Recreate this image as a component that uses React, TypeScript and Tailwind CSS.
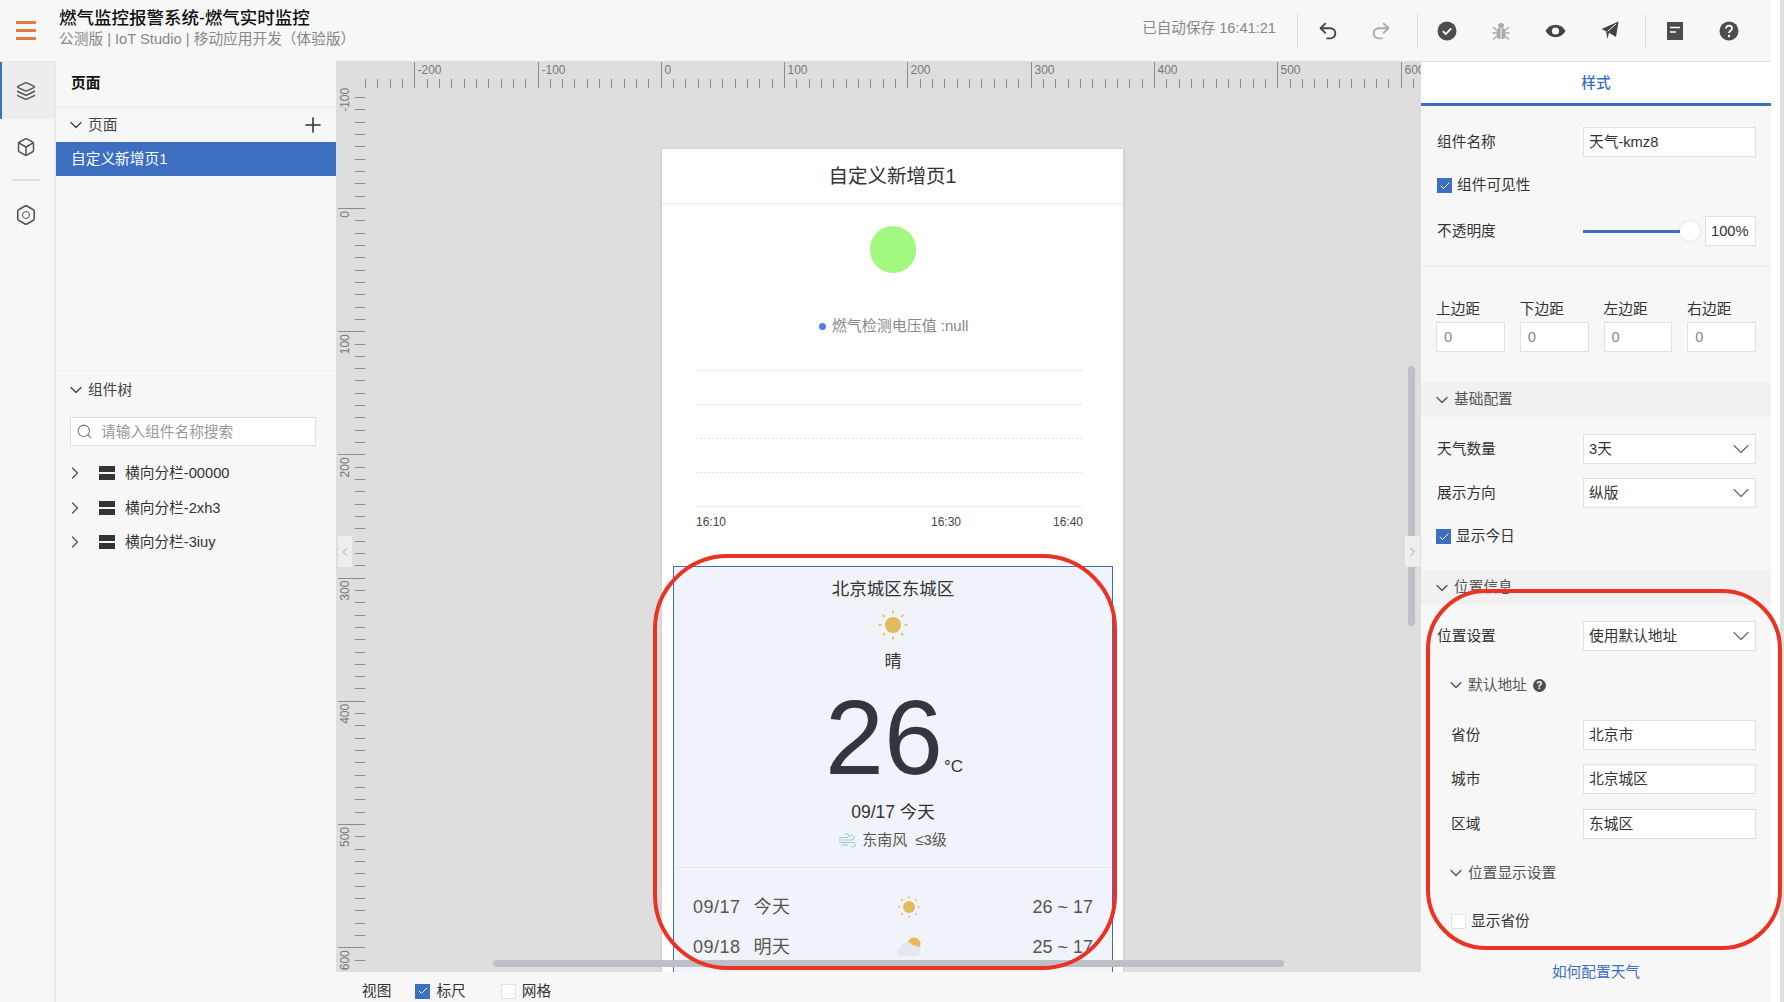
import { ChevronDown, ChevronLeft, ChevronRight, Plus, Search, Undo2, Redo2, Layers, Box, Hexagon, Check } from "lucide-react";
import type { ReactNode } from "react";

function Checkbox({ checked = false }: { checked?: boolean }) {
  if (checked) {
    return (
      <span className="flex size-[15px] shrink-0 items-center justify-center bg-[#3c6fc0] text-white">
        <Check size={12} strokeWidth={2} />
      </span>
    );
  }
  return <span className="block size-[15px] shrink-0 border border-[#e3e3e3] bg-white" />;
}

function TextBox({ children, className = "" }: { children?: ReactNode; className?: string }) {
  return (
    <div className={`flex h-[30px] items-center border border-[#e0e0e0] bg-white px-[5px] text-[14.7px] text-[#333] ${className}`}>
      {children}
    </div>
  );
}

function Row({ label, indent = false, className = "", children }: { label: string; indent?: boolean; className?: string; children: ReactNode }) {
  return (
    <div className={`flex h-[30px] items-center justify-between pr-[15px] ${indent ? "pl-[30px]" : "pl-[16px]"} ${className}`}>
      <span className="text-[14.7px] text-[#333]">{label}</span>
      {children}
    </div>
  );
}

function SelectBox({ value }: { value: string }) {
  return (
    <TextBox className="w-[173px] justify-between pr-0">
      <span>{value}</span>
      <ChevronDown size={28} strokeWidth={1} className="text-[#666]" />
    </TextBox>
  );
}

function SectionHead({ title, className = "" }: { title: string; className?: string }) {
  return (
    <div className={`flex h-[35px] items-center gap-[2px] bg-[#f1f1f1] pl-[11px] text-[14.7px] text-[#555] ${className}`}>
      <ChevronDown size={20} strokeWidth={1.6} />
      <span>{title}</span>
    </div>
  );
}

function SubHead({ title, className = "", children }: { title: string; className?: string; children?: ReactNode }) {
  return (
    <div className={`flex h-[20px] items-center gap-[2px] pl-[25px] text-[14.7px] text-[#555] ${className}`}>
      <ChevronDown size={20} strokeWidth={1.6} />
      <span>{title}</span>
      {children}
    </div>
  );
}

function Sun({ size }: { size: number }) {
  const rays = [0, 45, 90, 135, 180, 225, 270, 315];
  return (
    <svg width={size} height={size} viewBox="0 0 32 32">
      <circle cx="16" cy="16" r="8" fill="#e3bb5d" />
      {rays.map((r) => (
        <line key={r} x1="16" y1="1.5" x2="16" y2="4.5" stroke="#e8c26a" strokeWidth="2" transform={`rotate(${r} 16 16)`} />
      ))}
    </svg>
  );
}

function CloudSun() {
  return (
    <svg width="26" height="20" viewBox="0 0 26 20">
      <circle cx="18" cy="7" r="6.5" fill="#e3bb5d" />
      <path d="M5 19a4.5 4.5 0 0 1-.6-8.9A7 7 0 0 1 17 8.6 5.2 5.2 0 0 1 20.5 19z" fill="#e4e7ec" />
    </svg>
  );
}

function Wind() {
  return (
    <svg width="18" height="15" viewBox="0 0 18 15" fill="none" stroke="#9cc6d6" strokeWidth="1">
      <path d="M0 7h12.5a2.5 2.5 0 1 0-2.4-3.2" />
      <path d="M0 4.5h7.5a2 2 0 1 0-1.9-2.6" />
      <path d="M0 9.5h14a2.3 2.3 0 1 1-2.2 3" />
      <path d="M2 12h7" />
    </svg>
  );
}

function Ruler() {
  const hTicks: number[] = [];
  for (let k = -24; k <= 62; k++) hTicks.push(k);
  const vTicks: number[] = [];
  for (let k = -9; k <= 62; k++) {
    const y = 208 + k * 12.32 - 61;
    if (y >= 36) vTicks.push(k);
  }
  const labelY = [-100, 0, 100, 200, 300, 400, 500, 600];
  return (
    <svg className="pointer-events-none absolute top-0 left-0" width="1085" height="911" stroke="#8d8d8d" strokeWidth="1">
      {hTicks.map((k) => {
        const x = Math.round(660.8 + k * 12.33 - 336) + 0.5;
        const major = k % 10 === 0;
        return (
          <g key={k}>
            <line x1={x} x2={x} y1={major ? 1 : 18} y2={27} />
            {major && (
              <text x={x + 3} y={13} fontSize="12" fill="#777" stroke="none">
                {k * 10}
              </text>
            )}
          </g>
        );
      })}
      {vTicks.map((k) => {
        const y = Math.round(208 + k * 12.32 - 61) + 0.5;
        const major = k % 10 === 0;
        return <line key={k} y1={y} y2={y} x1={major ? 2 : 19} x2={29} />;
      })}
      {labelY.map((v) => {
        const y = 208 + v * 1.232 - 61 + 3;
        return (
          <text key={v} x={0} y={0} fontSize="12" fill="#777" stroke="none" textAnchor="end" transform={`translate(13 ${y}) rotate(-90)`}>
            {v}
          </text>
        );
      })}
    </svg>
  );
}

function Header() {
  return (
    <header className="flex h-[61px] shrink-0 items-center bg-[#f7f7f7]">
      <div className="ml-[16px] flex w-[20px] flex-col gap-[5px]">
        <span className="h-[3px] bg-[#e57a40]" />
        <span className="h-[3px] bg-[#e57a40]" />
        <span className="h-[3px] bg-[#e57a40]" />
      </div>
      <div className="mb-[5px] ml-[23px]">
        <div className="text-[17.5px] leading-[22px] font-medium text-[#111]">燃气监控报警系统-燃气实时监控</div>
        <div className="text-[14.7px] leading-[20px] text-[#888]">公测版 | IoT Studio | 移动应用开发（体验版）</div>
      </div>
      <div className="mb-[4px] ml-auto text-[14.6px] text-[#888]">已自动保存 16:41:21</div>
      <span className="mr-[19px] ml-[21px] h-[34px] w-px bg-[#ddd]" />
      <div className="flex w-[75px] items-center justify-between">
        <Undo2 size={22} strokeWidth={2} className="text-[#444]" />
        <Redo2 size={22} strokeWidth={2} className="text-[#aaa]" />
      </div>
      <span className="mr-[19px] ml-[25px] h-[34px] w-px bg-[#ddd]" />
      <div className="flex w-[182px] items-center justify-between">
        <svg width="20" height="20" viewBox="0 0 20 20">
          <circle cx="10" cy="10" r="9.5" fill="#4d4d4d" />
          <path d="M5.8 10.2l3 2.8 5.4-5.6" fill="none" stroke="#fff" strokeWidth="1.8" />
        </svg>
        <svg width="18" height="20" viewBox="0 0 18 20" fill="#aaa" stroke="#aaa">
          <ellipse cx="9" cy="4.5" rx="3" ry="2.5" stroke="none" />
          <rect x="4.5" y="7" width="9" height="11" rx="3.5" stroke="none" />
          <path d="M1 6l3.5 3M17 6l-3.5 3M.5 12h4M17.5 12h-4M1 18.5l3.5-3M17 18.5l-3.5-3" fill="none" strokeWidth="1.4" />
          <path d="M9 7v11" stroke="#f7f7f7" strokeWidth="1" />
        </svg>
        <svg width="21" height="14" viewBox="0 0 21 14">
          <path d="M.5 7C3 2.8 6.5.8 10.5.8S18 2.8 20.5 7C18 11.2 14.5 13.2 10.5 13.2S3 11.2.5 7z" fill="#444" />
          <circle cx="10.5" cy="7" r="3.6" fill="#f7f7f7" />
        </svg>
        <svg width="18" height="19" viewBox="0 0 18 19">
          <path d="M17.5.5L15 16 8 11.8 6.5 18 5 10.3.5 8z" fill="#444" />
          <path d="M15 3L6.5 10.5" stroke="#f7f7f7" strokeWidth="1" />
        </svg>
      </div>
      <span className="mr-[21px] ml-[26px] h-[34px] w-px bg-[#ddd]" />
      <div className="mr-[32px] flex w-[72px] items-center justify-between">
        <svg width="16" height="18" viewBox="0 0 16 18">
          <rect width="16" height="18" fill="#4d4d4d" />
          <path d="M3 5.5h10M3 10h6" stroke="#fff" strokeWidth="1.5" />
        </svg>
        <svg width="20" height="20" viewBox="0 0 20 20">
          <circle cx="10" cy="10" r="9.5" fill="#4d4d4d" />
          <path d="M7 7.6c0-1.8 1.3-2.9 3-2.9s3 1.100 3 2.700c0 2.300-3 2.300-3 4.600" fill="none" stroke="#fff" strokeWidth="1.8" />
          <circle cx="10" cy="15" r="1.2" fill="#fff" />
        </svg>
      </div>
    </header>
  );
}

function LeftRail() {
  return (
    <aside className="flex w-[56px] shrink-0 flex-col items-center border-t border-r-2 border-[#e8e8e8] bg-[#f7f7f7] text-[#555]">
      <div className="flex h-[57px] w-full items-center justify-center border-l-2 border-[#3c6fc0] bg-[#ededed] pr-[4px]">
        <Layers size={20} strokeWidth={1.8} />
      </div>
      <div className="flex h-[56px] w-full items-center justify-center pr-[2px]">
        <Box size={20} strokeWidth={1.8} />
      </div>
      <span className="mt-[4px] mr-[2px] h-[2px] w-[28px] bg-[#ddd]" />
      <div className="relative mt-[22px] mr-[2px] flex size-[24px] items-center justify-center">
        <Hexagon size={22} strokeWidth={1.8} />
        <span className="absolute size-[8px] rounded-full border-[1.5px] border-[#555]" />
      </div>
    </aside>
  );
}

function LeftPanel() {
  const tree = ["横向分栏-00000", "横向分栏-2xh3", "横向分栏-3iuy"];
  return (
    <aside className="flex w-[280px] shrink-0 flex-col bg-[#f7f7f7]">
      <div className="h-[310px] shrink-0 border-b border-[#eee]">
        <div className="flex h-[47px] items-center border-b-2 border-[#f0f0f0] pl-[15px] text-[14.7px] font-bold text-[#111]">页面</div>
        <div className="flex h-[34px] items-center justify-between pr-[11px] pl-[10px] text-[14.7px] text-[#444]">
          <span className="flex items-center gap-[2px]">
            <ChevronDown size={20} strokeWidth={1.6} />
            页面
          </span>
          <Plus size={24} strokeWidth={1.6} className="text-[#333]" />
        </div>
        <div className="flex h-[34px] items-center bg-[#3c6fc0] pl-[15px] text-[14.7px] text-white">自定义新增页1</div>
      </div>
      <div className="mt-[8px] flex items-center gap-[2px] pl-[10px] text-[14.7px] text-[#444]">
        <ChevronDown size={20} strokeWidth={1.6} />
        组件树
      </div>
      <div className="mx-[14px] mt-[16px] flex h-[29px] w-[246px] items-center border border-[#e0e0e0] bg-white pl-[5px] text-[14.7px] text-[#999]">
        <Search size={17} strokeWidth={1.5} className="mr-[8px] text-[#777]" />
        请输入组件名称搜索
      </div>
      <div className="mt-[10px] flex flex-col">
        {tree.map((name) => (
          <div key={name} className="flex h-[34.5px] items-center pl-[9px] text-[14.7px] text-[#333]">
            <ChevronRight size={20} strokeWidth={1.6} className="text-[#555]" />
            <span className="mr-[10px] ml-[14px] flex w-[16px] flex-col gap-[2px]">
              <span className="h-[6px] bg-[#333]" />
              <span className="h-[6px] bg-[#333]" />
            </span>
            {name}
          </div>
        ))}
      </div>
    </aside>
  );
}

function Forecast({ date, day, range, icon }: { date: string; day: string; range: string; icon: ReactNode }) {
  return (
    <div className="flex h-[40px] items-center pr-[19px] pl-[19px] text-[18px] text-[#555]">
      <span className="w-[203px] tracking-[0.5px]">
        {date}
        <span className="ml-[13px]">{day}</span>
      </span>
      <span className="flex w-[26px] justify-center">{icon}</span>
      <span className="flex-1 text-right">{range}</span>
    </div>
  );
}

function GridLine() {
  return <div className="h-px bg-[repeating-linear-gradient(90deg,#e4e4e4_0_2px,transparent_2px_4px)]" />;
}

function Phone() {
  return (
    <div className="mt-[88px] ml-[326px] w-[461px] bg-white shadow-[0_0_3px_rgba(0,0,0,0.12)]">
      <div className="flex h-[55px] items-center justify-center border-b border-[#eee] pt-[1px] text-[19.5px] text-[#333] shadow-[0_1px_3px_rgba(0,0,0,0.05)]">自定义新增页1</div>
      <div className="mx-auto mt-[22px] h-[47px] w-[46px] rounded-full bg-[#a3f87f]" />
      <div className="mt-[43px] flex items-center justify-center pl-[2px] text-[15px] leading-[20px] text-[#888]">
        <span className="mr-[6px] size-[7px] rounded-full bg-[#4f7cf0]" />
        燃气检测电压值 :null
      </div>
      <div className="mt-[34px] mr-[40px] ml-[34px] flex flex-col gap-[33px]">
        <GridLine />
        <GridLine />
        <GridLine />
        <GridLine />
        <div className="border-t border-[#eee]" />
      </div>
      <div className="relative mt-[6px] mr-[40px] ml-[34px] h-[18px] text-[12px] leading-[18px] text-[#444]">
        <span>16:10</span>
        <span className="absolute left-[235px]">16:30</span>
        <span className="absolute right-0">16:40</span>
      </div>
      <div className="mt-[35px] mr-[10px] ml-[11px] h-[420px] border border-[#3c6fc0] bg-[#f0f3f9] text-[#333]">
        <div className="mt-[11px] text-center text-[17.5px] leading-[22px]">北京城区东城区</div>
        <div className="mt-[9px] flex justify-center">
          <Sun size={32} />
        </div>
        <div className="mt-[10px] text-center text-[17px] leading-[22px]">晴</div>
        <div className="mt-[6px] flex items-end justify-center pl-[2px]">
          <span className="text-[106px] leading-[116px] text-[#33363b]">26</span>
          <span className="mb-[18px] ml-[1px] text-[17px] leading-[20px] text-[#33363b]">°C</span>
        </div>
        <div className="mt-[6px] text-center text-[17.5px] leading-[22px]">09/17 今天</div>
        <div className="mt-[7px] flex items-center justify-center gap-[5px] text-[15px] leading-[20px] text-[#555]">
          <Wind />
          <span>东南风</span>
          <span className="ml-[3px]">≤3级</span>
        </div>
        <div className="mt-[17px] border-t border-[#e3e6ec]" />
        <div className="mt-[19px]">
          <Forecast date="09/17" day="今天" range="26 ~ 17" icon={<Sun size={24} />} />
          <Forecast date="09/18" day="明天" range="25 ~ 17" icon={<CloudSun />} />
        </div>
      </div>
    </div>
  );
}

function Canvas() {
  return (
    <main className="flex w-[1085px] shrink-0 flex-col">
      <div className="relative h-[911px] shrink-0 overflow-hidden bg-[#dedede]">
        <Ruler />
        <Phone />
        <div className="absolute top-[899px] left-[157px] h-[7px] w-[791px] rounded-full bg-[#bcc1c8]" />
        <div className="absolute top-[305px] left-[1072px] h-[260px] w-[7px] rounded-full bg-[#bcc1c8]" />
        <div className="absolute top-[475px] left-[2px] flex h-[31px] w-[14px] items-center justify-center bg-[#eee] text-[#888]">
          <ChevronLeft size={16} strokeWidth={1.2} />
        </div>
        <div className="absolute top-[475px] left-[1069px] flex h-[31px] w-[15px] items-center justify-center bg-[#eee] text-[#888]">
          <ChevronRight size={16} strokeWidth={1.2} />
        </div>
      </div>
      <div className="flex h-[30px] items-center bg-[#f7f7f7] pt-[8px] pl-[26px] text-[14.7px] text-[#333]">
        <span>视图</span>
        <span className="ml-[24px]">
          <Checkbox checked />
        </span>
        <span className="ml-[6px]">标尺</span>
        <span className="ml-[35px]">
          <Checkbox />
        </span>
        <span className="ml-[6px]">网格</span>
      </div>
    </main>
  );
}

function RightPanel() {
  const margins = ["上边距", "下边距", "左边距", "右边距"];
  return (
    <aside className="w-[350px] shrink-0 border-t border-[#e0e0e0] bg-[#f7f7f7]">
      <div className="flex h-[44px] items-center justify-center border-b-[3px] border-[#3c6fc0] bg-white pt-[1px] text-[14.7px] font-medium text-[#3c6fc0]">样式</div>
      <Row label="组件名称" className="mt-[21px]">
        <TextBox className="w-[173px]">天气-kmz8</TextBox>
      </Row>
      <div className="mt-[21px] flex items-center gap-[5px] pl-[16px] text-[14.7px] leading-[15px] text-[#333]">
        <Checkbox checked />
        组件可见性
      </div>
      <Row label="不透明度" className="mt-[23px]">
        <div className="relative flex w-[173px] items-center justify-between">
          <span className="h-[3px] w-[97px] bg-[#3c6fc0]" />
          <span className="absolute left-[97px] size-[20px] rounded-full bg-white shadow-[0_0_3px_rgba(0,0,0,0.15)]" />
          <TextBox className="w-[51px] px-[3px]">100%</TextBox>
        </div>
      </Row>
      <div className="mt-[19px] border-t-2 border-[#f0f0f0]" />
      <div className="mt-[32px] grid grid-cols-4 gap-x-[15px] pr-[15px] pl-[15px]">
        {margins.map((m) => (
          <div key={m}>
            <div className="text-[14.7px] leading-[20px] text-[#333]">{m}</div>
            <TextBox className="mt-[3px] px-[7px] text-[#888]">0</TextBox>
          </div>
        ))}
      </div>
      <SectionHead title="基础配置" className="mt-[30px]" />
      <Row label="天气数量" className="mt-[17px]">
        <SelectBox value="3天" />
      </Row>
      <Row label="展示方向" className="mt-[14px]">
        <SelectBox value="纵版" />
      </Row>
      <div className="mt-[21px] flex items-center gap-[5px] pl-[15px] text-[14.7px] leading-[15px] text-[#333]">
        <Checkbox checked />
        显示今日
      </div>
      <SectionHead title="位置信息" className="mt-[26px]" />
      <Row label="位置设置" className="mt-[16px]">
        <SelectBox value="使用默认地址" />
      </Row>
      <SubHead title="默认地址" className="mt-[24px]">
        <span className="ml-[4px] flex size-[13px] items-center justify-center rounded-full bg-[#4d4d4d] text-[10px] font-bold text-white">?</span>
      </SubHead>
      <Row label="省份" indent className="mt-[25px]">
        <TextBox className="w-[173px]">北京市</TextBox>
      </Row>
      <Row label="城市" indent className="mt-[14px]">
        <TextBox className="w-[173px]">北京城区</TextBox>
      </Row>
      <Row label="区域" indent className="mt-[15px]">
        <TextBox className="w-[173px]">东城区</TextBox>
      </Row>
      <SubHead title="位置显示设置" className="mt-[24px]" />
      <div className="mt-[31px] flex items-center gap-[5px] pl-[30px] text-[14.7px] leading-[15px] text-[#333]">
        <Checkbox />
        显示省份
      </div>
      <div className="mt-[33px] text-center text-[14.7px] leading-[20px] text-[#3c6fc0]">如何配置天气</div>
    </aside>
  );
}

export default function App() {
  return (
    <div className="relative flex h-[1002px] w-[1784px] overflow-hidden bg-white font-['Liberation_Sans','Noto_Sans_CJK_SC',sans-serif]">
      <div className="flex w-[1771px] shrink-0 flex-col">
        <Header />
        <div className="flex h-[941px]">
          <LeftRail />
          <LeftPanel />
          <Canvas />
          <RightPanel />
        </div>
      </div>
      <div className="w-[9px] shrink-0 bg-white" />
      <div className="w-[4px] shrink-0 bg-[#e0e0e0]" />
      <div className="pointer-events-none absolute top-[554px] left-[653px] h-[416px] w-[464px] rounded-[75px] border-[4px] border-[#ea3323]" />
      <div className="pointer-events-none absolute top-[589px] left-[1426px] h-[361px] w-[356px] rounded-[60px] border-[4px] border-[#ea3323]" />
    </div>
  );
}
